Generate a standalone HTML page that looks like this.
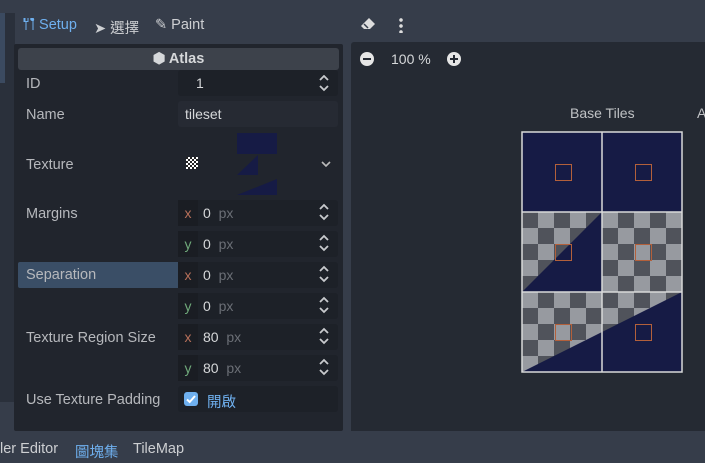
<!DOCTYPE html>
<html><head><style>
*{margin:0;padding:0;box-sizing:border-box}
body{width:705px;height:463px;background:#363d4a;font-family:"Liberation Sans","Noto Sans CJK TC",sans-serif;font-size:14px;color:#cdcfd2;position:relative;overflow:hidden}
.a{position:absolute}
.lbl{position:absolute;left:26px;color:#b6b8bc;font-size:14.5px;margin-top:1px}
.fld{position:absolute;left:178px;width:160px;height:26px;background:#1d2128;border-radius:3px}
.ax{position:absolute;left:178px;width:20px;height:26px;background:#1a1d23;text-align:center;line-height:26px}
.v{position:absolute;left:203px;line-height:26px;color:#d6d8da}
.px{color:#6b6f76}
</style></head><body>
<div class="a" style="left:0;top:13px;width:15px;height:389px;background:#2a303b"></div>
<div class="a" style="left:0;top:13px;width:5px;height:70px;background:#3b4a60"></div>
<div class="a" style="left:22px;top:17px;color:#6fb0ef;font-size:14.5px">
<svg width="13" height="14" viewBox="0 0 12 14" style="vertical-align:-2px"><path d="M1 1v4h2v8h1V5h2V1H5v3H3V1z M8 1a2 2 0 0 0 2 3v9h1V4a2 2 0 0 0 0-3" fill="#6fb0ef"/></svg> Setup</div>
<div class="a" style="left:94px;top:17px;color:#cdcfd2;font-size:14.5px">➤ 選擇</div>
<div class="a" style="left:155px;top:17px;color:#cdcfd2;font-size:14.5px">✎ Paint</div>
<div class="a" style="left:14px;top:44px;width:329px;height:387px;background:#21252d;border-radius:2px"></div>
<div class="a" style="left:18px;top:48px;width:321px;height:22px;background:#3d424b;border-radius:3px;text-align:center;line-height:22px;font-weight:bold;color:#d6d8da;font-size:14.5px">⬢ Atlas</div>

<div class="lbl" style="top:75px">ID</div>
<div class="fld" style="top:70px"></div><div class="v" style="top:70px;left:196px">1</div>
<div class="lbl" style="top:106px">Name</div>
<div class="fld" style="top:101px;background:#262a33"></div><div class="v" style="top:101px;left:185px">tileset</div>
<div class="lbl" style="top:156px">Texture</div>
<div class="a" style="left:186px;top:157px;width:12px;height:12px;background:repeating-conic-gradient(#fff 0 25%,#222 0 50%) 0 0/4px 4px"></div>
<div class="a" style="left:237px;top:133px;width:40px;height:21px;background:#161b45"></div>
<svg class="a" style="left:237px;top:155px" width="40" height="40"><polygon points="0,20 21,0 21,20" fill="#161b45"/><polygon points="0,40 40,24 40,40" fill="#161b45"/></svg>
<svg class="a" style="left:321px;top:161px" width="10" height="6"><path d="M1 1l4 4 4-4" fill="none" stroke="#bbb" stroke-width="1.6"/></svg>

<div class="lbl" style="top:205px">Margins</div>
<div class="lbl" style="left:18px;width:160px;height:26px;top:261px;background:#3a4e66;padding-left:8px;line-height:26px;border-radius:2px 0 0 2px">Separation</div>
<div class="lbl" style="top:329px">Texture Region Size</div>
<div class="lbl" style="top:391px">Use Texture Padding</div>

<div class="fld" style="top:200px"></div><div class="ax" style="top:200px;color:#b7705a">x</div><div class="v" style="top:200px">0 <span class="px">&nbsp;px</span></div>
<div class="fld" style="top:231px"></div><div class="ax" style="top:231px;color:#6fa87a">y</div><div class="v" style="top:231px">0 <span class="px">&nbsp;px</span></div>
<div class="fld" style="top:262px"></div><div class="ax" style="top:262px;color:#b7705a">x</div><div class="v" style="top:262px">0 <span class="px">&nbsp;px</span></div>
<div class="fld" style="top:293px"></div><div class="ax" style="top:293px;color:#6fa87a">y</div><div class="v" style="top:293px">0 <span class="px">&nbsp;px</span></div>
<div class="fld" style="top:324px"></div><div class="ax" style="top:324px;color:#b7705a">x</div><div class="v" style="top:324px">80 <span class="px">&nbsp;px</span></div>
<div class="fld" style="top:355px"></div><div class="ax" style="top:355px;color:#6fa87a">y</div><div class="v" style="top:355px">80 <span class="px">&nbsp;px</span></div>
<div class="fld" style="top:386px"></div>
<svg class="a" style="left:184px;top:392px" width="14" height="14"><rect width="14" height="14" rx="3" fill="#6fb0ef"/><path d="M3 7.5l2.7 2.5L11 4" fill="none" stroke="#fff" stroke-width="2"/></svg>
<div class="a" style="left:207px;top:391px;color:#6fb0ef;font-size:14.5px">開啟</div>

<svg class="a" style="left:318px;top:75px" width="12" height="340" fill="none" stroke="#c8cacd" stroke-width="1.8">
<path d="M2 5l4-4 4 4M2 11l4 4 4-4"/>
<path d="M2 134l4-4 4 4M2 140l4 4 4-4"/>
<path d="M2 165l4-4 4 4M2 171l4 4 4-4"/>
<path d="M2 196l4-4 4 4M2 202l4 4 4-4"/>
<path d="M2 227l4-4 4 4M2 233l4 4 4-4"/>
<path d="M2 258l4-4 4 4M2 264l4 4 4-4"/>
<path d="M2 289l4-4 4 4M2 295l4 4 4-4"/>
</svg>

<div class="a" style="left:0;top:441px;color:#cdcfd2;font-size:14.5px">ler Editor</div>
<div class="a" style="left:75px;top:441px;color:#6fb0ef;font-size:14.5px">圖塊集</div>
<div class="a" style="left:133px;top:441px;color:#cdcfd2;font-size:14.5px">TileMap</div>

<svg class="a" style="left:360px;top:17px" width="16" height="14"><path d="M9 1l6 6-5 5H4L1 9z" fill="#ddd"/><path d="M4 7l4 4" stroke="#363d4a" stroke-width="1.5"/></svg>
<div class="a" style="left:399px;top:17px;width:4px;height:16px;background:radial-gradient(circle,#ddd 1.6px,transparent 2px) 0 0/4px 6px"></div>
<div class="a" style="left:351px;top:42px;width:354px;height:389px;background:#252a33;border-radius:3px 0 0 0"></div>
<div class="a" style="left:360px;top:52px;width:14px;height:14px;border-radius:50%;background:#e6e6e6"><div class="a" style="left:3px;top:6px;width:8px;height:2px;background:#252a33"></div></div>
<div class="a" style="left:391px;top:51px;color:#d6d8da">100 %</div>
<div class="a" style="left:447px;top:52px;width:14px;height:14px;border-radius:50%;background:#e6e6e6"><div class="a" style="left:3px;top:6px;width:8px;height:2px;background:#252a33"></div><div class="a" style="left:6px;top:3px;width:2px;height:8px;background:#252a33"></div></div>
<div class="a" style="left:570px;top:105px;color:#c0c2c5">Base Tiles</div>
<div class="a" style="left:697px;top:105px;color:#c0c2c5">A</div>

<div class="a" style="left:522px;top:212px;width:160px;height:160px;background:repeating-conic-gradient(#979aa0 0 25%,#50535b 0 50%) 0 0/32px 32px"></div>
<svg class="a" style="left:521px;top:131px" width="163" height="243">
<rect x="1" y="1" width="160" height="80" fill="#161b45"/>
<polygon points="1,161 81,81 81,161" fill="#161b45"/>
<polygon points="1,241 161,161 161,241" fill="#161b45"/>
<g fill="none" stroke="#d9d9d9" stroke-width="1.5"><rect x="1" y="1" width="160" height="240"/><path d="M81 1v240M1 81h160M1 161h160"/></g>
<g fill="none" stroke="#b3603b" stroke-width="1"><rect x="34.5" y="33.5" width="16" height="16"/><rect x="114.5" y="33.5" width="16" height="16"/><rect x="34.5" y="113.5" width="16" height="16"/><rect x="114.5" y="113.5" width="16" height="16"/><rect x="34.5" y="193.5" width="16" height="16"/><rect x="114.5" y="193.5" width="16" height="16"/></g>
</svg>
</body></html>
